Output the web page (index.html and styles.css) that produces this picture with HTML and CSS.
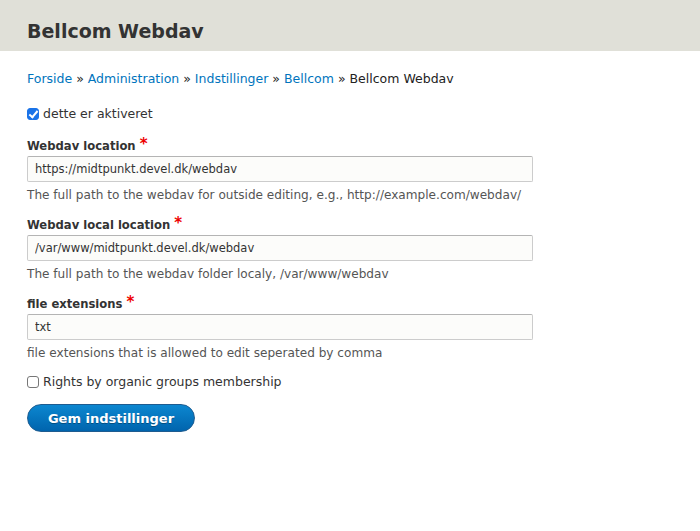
FILE: index.html
```
<!DOCTYPE html>
<html lang="da">
<head>
<meta charset="utf-8">
<title>Bellcom Webdav</title>
<link rel="stylesheet" href="styles.css">
</head>
<body>
<header class="page-header">
  <h1 class="page-title">Bellcom Webdav</h1>
</header>
<main class="content">
  <nav class="breadcrumb">
    <a href="#">Forside</a> » <a href="#">Administration</a> » <a href="#">Indstillinger</a> » <a href="#">Bellcom</a> » Bellcom Webdav
  </nav>
  <form class="form">
    <label class="check-item">
      <input type="checkbox" class="check" checked>
      <span>dette er aktiveret</span>
    </label>
    <div class="field field-first">
      <label class="field-label">Webdav location <span class="req">*</span></label>
      <input class="text-input" type="text" value="https://midtpunkt.devel.dk/webdav">
      <div class="desc">The full path to the webdav for outside editing, e.g., http://example.com/webdav/</div>
    </div>
    <div class="field">
      <label class="field-label">Webdav local location <span class="req">*</span></label>
      <input class="text-input" type="text" value="/var/www/midtpunkt.devel.dk/webdav">
      <div class="desc">The full path to the webdav folder localy, /var/www/webdav</div>
    </div>
    <div class="field">
      <label class="field-label">file extensions <span class="req">*</span></label>
      <input class="text-input" type="text" value="txt">
      <div class="desc">file extensions that is allowed to edit seperated by comma</div>
    </div>
    <label class="check-item check-item-2">
      <input type="checkbox" class="check">
      <span>Rights by organic groups membership</span>
    </label>
    <div class="actions">
      <button type="button" class="btn">Gem indstillinger</button>
    </div>
  </form>
</main>
</body>
</html>
```
FILE: styles.css
```
html, body {
  margin: 0;
  padding: 0;
  background: #fff;
}
body {
  font-family: "DejaVu Sans", Verdana, sans-serif;
  font-size: 12px;
  color: #333;
}
.page-header {
  background: #e0e0d8;
  height: 51px;
  padding: 0 27px;
  box-sizing: border-box;
  display: flex;
  align-items: center;
}
.page-title {
  margin: 0;
  font-size: 19px;
  font-weight: bold;
  color: #333;
  padding-top: 11px;
}
.content {
  padding: 20px 27px 0;
}
.breadcrumb {
  font-size: 12.5px;
  color: #222;
  line-height: 16px;
}
.breadcrumb a {
  color: #0074bd;
  text-decoration: none;
}
.form {
  margin-top: 19px;
}
.check-item {
  display: flex;
  align-items: center;
  gap: 4px;
  font-size: 12.5px;
  color: #333;
  line-height: 16px;
}
.check {
  appearance: none;
  -webkit-appearance: none;
  width: 12px;
  height: 12px;
  margin: 0;
  border: 1px solid #777;
  border-radius: 3px;
  background: #fff;
  box-sizing: border-box;
  position: relative;
  flex: none;
}
.check:checked {
  background: #1a73e8;
  border-color: #1a73e8;
}
.check:checked::after {
  content: "";
  position: absolute;
  left: 3px;
  top: 0px;
  width: 3px;
  height: 7px;
  border: solid #fff;
  border-width: 0 2px 2px 0;
  transform: rotate(40deg);
}
.field {
  margin-top: 14px;
}
.field-first {
  margin-top: 16px;
}
.field-label {
  display: block;
  font-weight: bold;
  font-size: 11.6px;
  line-height: 16px;
  height: 16px;
  color: #333;
  margin-bottom: 2px;
}
.req {
  color: #e00;
  font-size: 15px;
  line-height: 0;
  vertical-align: 1px;
}
.text-input {
  display: block;
  width: 506px;
  height: 26px;
  box-sizing: border-box;
  border: 1px solid #ccc;
  border-top-color: #b4b4b4;
  border-radius: 2px;
  background: #fcfcfa;
  padding: 0 7px;
  font-family: "DejaVu Sans", Verdana, sans-serif;
  font-size: 11.5px;
  color: #333;
  margin: 0;
}
.desc {
  font-size: 12.1px;
  color: #555;
  line-height: 16px;
  margin-top: 5px;
}
.check-item-2 {
  margin-top: 13px;
}
.actions {
  margin-top: 14px;
}
.btn {
  width: 168px;
  height: 28px;
  border: 1px solid #1e5c90;
  border-radius: 14px;
  background: linear-gradient(#0c87d0, #0064ad);
  color: #fff;
  font-family: "DejaVu Sans", Verdana, sans-serif;
  font-weight: bold;
  font-size: 13px;
  text-shadow: 0 1px 0 rgba(0,0,0,0.3);
  padding: 0;
}
```
